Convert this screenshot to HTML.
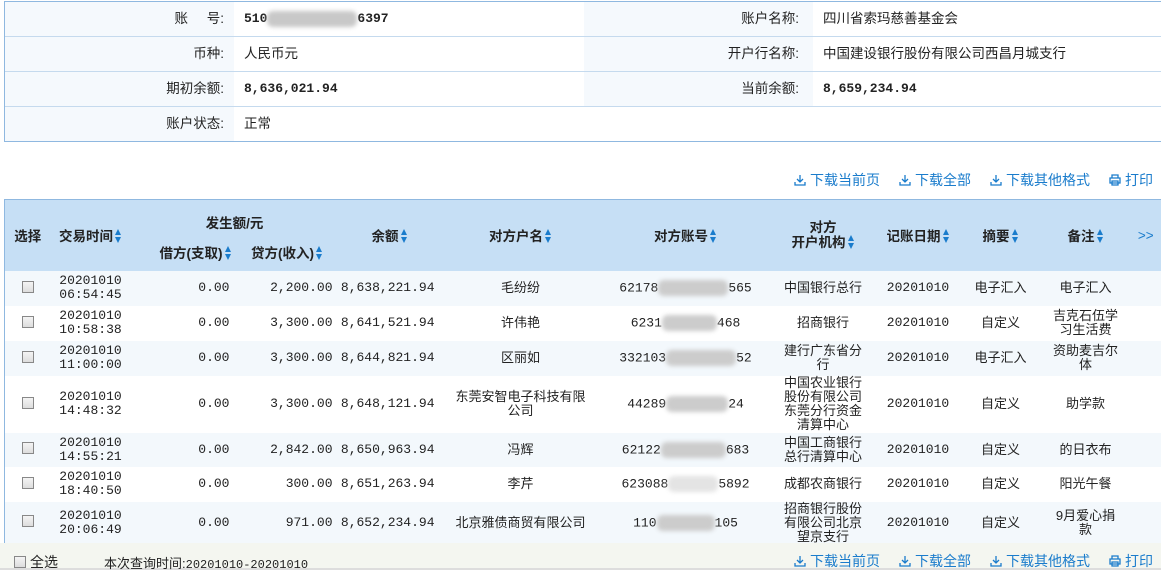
<!DOCTYPE html>
<html><head><meta charset="utf-8"><style>
*{margin:0;padding:0;box-sizing:border-box}
body{width:1161px;height:572px;overflow:hidden;background:#fff;font-family:"Liberation Sans","Noto Sans CJK SC",sans-serif;font-size:13px;color:#222;position:relative}
.info{position:absolute;left:4px;top:1px;width:1160px;border:1px solid #8fb8e0;border-right:none}
.ir{height:35px;display:flex;border-bottom:1px solid #c5daee}
.ir:last-child{border-bottom:none;height:34px}
.lab{width:229px;background:#f5f9fd;text-align:right;padding-right:10px;line-height:34px;font-size:13.5px}
.val{width:350px;background:#fff;padding-left:10px;line-height:34px;font-size:13.5px}
.lab2{width:229px;background:#f5f9fd;text-align:right;padding-right:14px;line-height:34px;font-size:13.5px}
.val2{flex:1;padding-left:10px;line-height:34px;font-size:13.5px;background:#fff}
.mono{font-family:"Liberation Mono",monospace;font-weight:bold;font-size:13px}
.links{position:absolute;top:170px;right:0;color:#1a7ccc;font-size:14px;display:flex;gap:0}
.links span{margin-left:19px;display:flex;align-items:center}
.links svg{margin-right:4px}
.tb{position:absolute;left:4px;top:199px;width:1157px;border:1px solid #8fb8e0;border-right:none;border-collapse:collapse;table-layout:fixed}
.tb th{background:#c6dff5;font-weight:bold;font-size:13.5px;color:#222}
.tb td{text-align:center;font-size:13px;line-height:14px}
.tb tr.a td{background:#f3f8fc}
.n{font-family:"Liberation Mono",monospace;font-size:12px;text-align:right!important;padding-right:6px}
.d{font-family:"Liberation Mono",monospace;font-size:12px}
.ar{display:inline-block;width:7px;height:14px;vertical-align:-2px;margin-left:2px;position:relative}
.ar:before{content:"";position:absolute;left:0;top:0;border:3.5px solid transparent;border-bottom:6px solid #1a7ccc;border-top:0}
.ar:after{content:"";position:absolute;left:0;bottom:0;border:3.5px solid transparent;border-top:6px solid #1a7ccc;border-bottom:0}
.cb{display:inline-block;width:12px;height:12px;border:1px solid #888;background:linear-gradient(#f4f4f4,#ddd)}
.bl{display:inline-block;height:16px;background:#ccc;filter:blur(2px);border-radius:6px;vertical-align:middle}
.foot{position:absolute;left:0;top:543px;width:1161px;height:27px;background:#f4f6f0;border-bottom:2px solid #ddd}
.foot .l{position:absolute;left:14px;top:9px;font-size:14px;display:flex;align-items:center}
.foot .links{top:8px}
</style></head><body>
<div class="info">
<div class="ir"><div class="lab">账 &nbsp; &nbsp; 号:</div><div class="val mono">510<span class="bl" style="width:90px;background:#c8c8c8"></span>6397</div><div class="lab2">账户名称:</div><div class="val2">四川省索玛慈善基金会</div></div>
<div class="ir"><div class="lab">币种:</div><div class="val">人民币元</div><div class="lab2">开户行名称:</div><div class="val2">中国建设银行股份有限公司西昌月城支行</div></div>
<div class="ir"><div class="lab">期初余额:</div><div class="val mono">8,636,021.94</div><div class="lab2">当前余额:</div><div class="val2 mono">8,659,234.94</div></div>
<div class="ir"><div class="lab">账户状态:</div><div class="val">正常</div><div class="lab2" style="background:#fff"></div><div class="val2"></div></div>
</div>
<div class="links">
<span><svg width="12" height="12" viewBox="0 0 12 12" fill="none" stroke="#1a7ccc" stroke-width="1.3"><path d="M6 1v7M3 5l3 3 3-3M1 8v3h10V8"/></svg>下载当前页</span>
<span><svg width="12" height="12" viewBox="0 0 12 12" fill="none" stroke="#1a7ccc" stroke-width="1.3"><path d="M6 1v7M3 5l3 3 3-3M1 8v3h10V8"/></svg>下载全部</span>
<span><svg width="12" height="12" viewBox="0 0 12 12" fill="none" stroke="#1a7ccc" stroke-width="1.3"><path d="M6 1v7M3 5l3 3 3-3M1 8v3h10V8"/></svg>下载其他格式</span>
<span style="margin-right:8px"><svg width="12" height="12" viewBox="0 0 12 12" fill="none" stroke="#1a7ccc" stroke-width="1.3"><path d="M3 4V1h6v3M1 4h10v5H1zM3 7h6v4H3z"/></svg>打印</span>
</div>
<table class="tb">
<colgroup><col style="width:46px"><col style="width:80px"><col style="width:105px"><col style="width:103px"><col style="width:102px"><col style="width:160px"><col style="width:170px"><col style="width:105px"><col style="width:85px"><col style="width:80px"><col style="width:90px"><col></colgroup>
<tr style="height:36px"><th rowspan="2">选择</th><th rowspan="2">交易时间<span class="ar"></span></th><th colspan="2" style="vertical-align:bottom;padding-bottom:4px">发生额/元</th><th rowspan="2">余额<span class="ar"></span></th><th rowspan="2">对方户名<span class="ar"></span></th><th rowspan="2">对方账号<span class="ar"></span></th><th rowspan="2" style="line-height:15px">对方<br>开户机构<span class="ar"></span></th><th rowspan="2">记账日期<span class="ar"></span></th><th rowspan="2">摘要<span class="ar"></span></th><th rowspan="2">备注<span class="ar"></span></th><th rowspan="2" style="color:#1a7ccc;font-weight:normal">&gt;&gt;</th></tr>
<tr style="height:35px"><th style="text-align:right;padding-right:4px;vertical-align:top;padding-top:6px">借方(支取)<span class="ar"></span></th><th style="vertical-align:top;padding-top:6px">贷方(收入)<span class="ar"></span></th></tr>
<tr class="a" style="height:35px"><td><span class="cb"></span></td><td class="d">20201010<br>06:54:45</td><td class="n">0.00</td><td class="n">2,200.00</td><td class="n">8,638,221.94</td><td>毛纷纷</td><td class="d">62178<span class="bl" style="width:70px"></span>565</td><td>中国银行总行</td><td class="d">20201010</td><td>电子汇入</td><td>电子汇入</td><td></td></tr>
<tr style="height:35px"><td><span class="cb"></span></td><td class="d">20201010<br>10:58:38</td><td class="n">0.00</td><td class="n">3,300.00</td><td class="n">8,641,521.94</td><td>许伟艳</td><td class="d">6231<span class="bl" style="width:55px"></span>468</td><td>招商银行</td><td class="d">20201010</td><td>自定义</td><td>吉克石伍学<br>习生活费</td><td></td></tr>
<tr class="a" style="height:35px"><td><span class="cb"></span></td><td class="d">20201010<br>11:00:00</td><td class="n">0.00</td><td class="n">3,300.00</td><td class="n">8,644,821.94</td><td>区丽如</td><td class="d">332103<span class="bl" style="width:70px"></span>52</td><td>建行广东省分<br>行</td><td class="d">20201010</td><td>电子汇入</td><td>资助麦吉尔<br>体</td><td></td></tr>
<tr style="height:57px"><td><span class="cb"></span></td><td class="d">20201010<br>14:48:32</td><td class="n">0.00</td><td class="n">3,300.00</td><td class="n">8,648,121.94</td><td>东莞安智电子科技有限<br>公司</td><td class="d">44289<span class="bl" style="width:62px"></span>24</td><td>中国农业银行<br>股份有限公司<br>东莞分行资金<br>清算中心</td><td class="d">20201010</td><td>自定义</td><td>助学款</td><td></td></tr>
<tr class="a" style="height:34px"><td><span class="cb"></span></td><td class="d">20201010<br>14:55:21</td><td class="n">0.00</td><td class="n">2,842.00</td><td class="n">8,650,963.94</td><td>冯辉</td><td class="d">62122<span class="bl" style="width:65px"></span>683</td><td>中国工商银行<br>总行清算中心</td><td class="d">20201010</td><td>自定义</td><td>的日衣布</td><td></td></tr>
<tr style="height:35px"><td><span class="cb"></span></td><td class="d">20201010<br>18:40:50</td><td class="n">0.00</td><td class="n">300.00</td><td class="n">8,651,263.94</td><td>李芹</td><td class="d">623088<span class="bl" style="width:50px;background:#e4e4e4"></span>5892</td><td>成都农商银行</td><td class="d">20201010</td><td>自定义</td><td>阳光午餐</td><td></td></tr>
<tr class="a" style="height:42px"><td><span class="cb"></span></td><td class="d">20201010<br>20:06:49</td><td class="n">0.00</td><td class="n">971.00</td><td class="n">8,652,234.94</td><td>北京雅债商贸有限公司</td><td class="d">110<span class="bl" style="width:58px"></span>105</td><td>招商银行股份<br>有限公司北京<br>望京支行</td><td class="d">20201010</td><td>自定义</td><td>9月爱心捐<br>款</td><td></td></tr>
</table>
<div class="foot">
<div class="l"><span class="cb" style="margin-right:4px"></span>全选<span style="margin-left:46px;font-size:13px">本次查询时间:<span class="d">20201010-20201010</span></span></div>
<div class="links">
<span><svg width="12" height="12" viewBox="0 0 12 12" fill="none" stroke="#1a7ccc" stroke-width="1.3"><path d="M6 1v7M3 5l3 3 3-3M1 8v3h10V8"/></svg>下载当前页</span>
<span><svg width="12" height="12" viewBox="0 0 12 12" fill="none" stroke="#1a7ccc" stroke-width="1.3"><path d="M6 1v7M3 5l3 3 3-3M1 8v3h10V8"/></svg>下载全部</span>
<span><svg width="12" height="12" viewBox="0 0 12 12" fill="none" stroke="#1a7ccc" stroke-width="1.3"><path d="M6 1v7M3 5l3 3 3-3M1 8v3h10V8"/></svg>下载其他格式</span>
<span style="margin-right:8px"><svg width="12" height="12" viewBox="0 0 12 12" fill="none" stroke="#1a7ccc" stroke-width="1.3"><path d="M3 4V1h6v3M1 4h10v5H1zM3 7h6v4H3z"/></svg>打印</span>
</div>
</div>
</body></html>
